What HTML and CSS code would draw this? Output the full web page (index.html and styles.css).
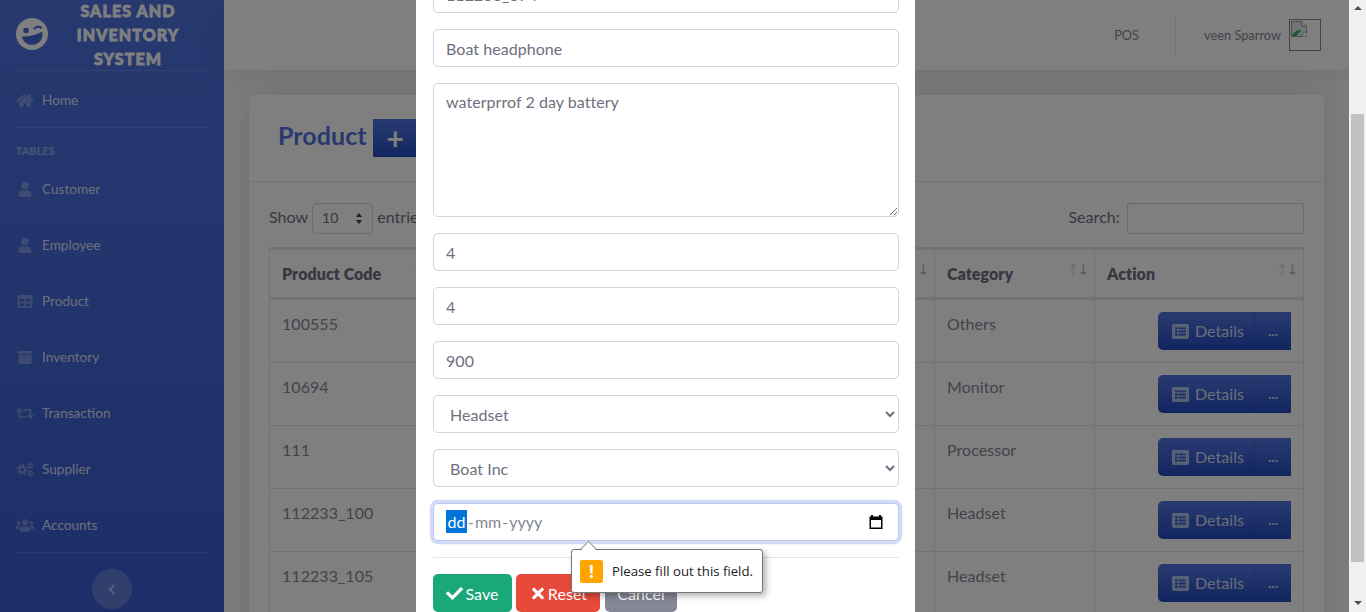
FILE: index.html
```html
<!DOCTYPE html>
<html>
<head>
    <title>Sales and Inventory System</title>
    <link rel="stylesheet" href="styles.css">
</head>
<body>
    <svg class="icon-defs" xmlns="http://www.w3.org/2000/svg">
        <symbol id="i-home" viewBox="0 0 576 512"><path d="M280.37 148.26L96 300.11V464a16 16 0 0 0 16 16l112.06-.29a16 16 0 0 0 15.92-16V368a16 16 0 0 1 16-16h64a16 16 0 0 1 16 16v95.64a16 16 0 0 0 16 16.05L464 480a16 16 0 0 0 16-16V300L295.67 148.26a12.19 12.19 0 0 0-15.3 0zM571.6 251.47L488 182.56V44.05a12 12 0 0 0-12-12h-56a12 12 0 0 0-12 12v72.61L318.47 43a48 48 0 0 0-61 0L4.34 251.47a12 12 0 0 0-1.6 16.9l25.5 31A12 12 0 0 0 45.15 301l235.22-193.74a12.19 12.19 0 0 1 15.3 0L530.9 301a12 12 0 0 0 16.9-1.6l25.5-31a12 12 0 0 0-1.7-16.93z"/></symbol>
        <symbol id="i-user" viewBox="0 0 448 512"><path d="M224 256c70.7 0 128-57.3 128-128S294.7 0 224 0 96 57.3 96 128s57.3 128 128 128zm89.6 32h-16.7c-22.2 10.2-46.9 16-72.9 16s-50.6-5.8-72.9-16h-16.7C60.2 288 0 348.2 0 422.4V464c0 26.5 21.5 48 48 48h352c26.5 0 48-21.5 48-48v-41.6c0-74.2-60.2-134.4-134.4-134.4z"/></symbol>
        <symbol id="i-table" viewBox="0 0 512 512"><path d="M464 32H48C21.49 32 0 53.49 0 80v352c0 26.51 21.49 48 48 48h416c26.51 0 48-21.49 48-48V80c0-26.51-21.49-48-48-48zM224 416H64v-96h160v96zm0-160H64v-96h160v96zm224 160H288v-96h160v96zm0-160H288v-96h160v96z"/></symbol>
        <symbol id="i-archive" viewBox="0 0 512 512"><path d="M32 448c0 17.7 14.3 32 32 32h384c17.7 0 32-14.3 32-32V160H32v288zm160-212c0-6.6 5.4-12 12-12h104c6.6 0 12 5.4 12 12v8c0 6.6-5.4 12-12 12H204c-6.6 0-12-5.4-12-12v-8zM480 32H32C14.3 32 0 46.3 0 64v48c0 8.8 7.2 16 16 16h480c8.8 0 16-7.2 16-16V64c0-17.7-14.3-32-32-32z"/></symbol>
        <symbol id="i-retweet" viewBox="0 0 640 512"><path d="M629.657 343.598L528.971 444.284c-9.373 9.372-24.568 9.372-33.941 0L394.343 343.598c-9.373-9.373-9.373-24.569 0-33.941l10.823-10.823c9.562-9.562 25.133-9.34 34.419.492L480 342.118V160H292.451a24.005 24.005 0 0 1-16.971-7.029l-16-16C244.361 121.851 255.069 96 276.451 96H520c13.255 0 24 10.745 24 24v222.118l40.416-42.792c9.285-9.831 24.856-10.054 34.419-.492l10.823 10.823c9.372 9.372 9.372 24.569-.001 33.941zm-265.138 15.431A23.999 23.999 0 0 0 347.548 352H160V169.881l40.416 42.792c9.286 9.831 24.856 10.054 34.419.491l10.822-10.822c9.373-9.373 9.373-24.569 0-33.941L144.971 67.716c-9.373-9.373-24.569-9.373-33.941 0L10.343 168.402c-9.373 9.373-9.373 24.569 0 33.941l10.822 10.822c9.562 9.562 25.133 9.34 34.419-.491L96 169.881V392c0 13.255 10.745 24 24 24h243.549c21.382 0 32.09-25.851 16.971-40.971l-16.001-16z"/></symbol>
        <symbol id="i-cogs" viewBox="0 0 640 512"><circle cx="224" cy="256" r="108" fill="none" stroke="currentColor" stroke-width="84"/><circle cx="224" cy="256" r="180" fill="none" stroke="currentColor" stroke-width="56" stroke-dasharray="62 79.4"/><circle cx="512" cy="124" r="62" fill="none" stroke="currentColor" stroke-width="48"/><circle cx="512" cy="124" r="100" fill="none" stroke="currentColor" stroke-width="30" stroke-dasharray="42 36.5"/><circle cx="512" cy="388" r="62" fill="none" stroke="currentColor" stroke-width="48"/><circle cx="512" cy="388" r="100" fill="none" stroke="currentColor" stroke-width="30" stroke-dasharray="42 36.5"/></symbol>
        <symbol id="i-users" viewBox="0 0 640 512"><path d="M96 224c35.3 0 64-28.7 64-64s-28.7-64-64-64-64 28.7-64 64 28.7 64 64 64zm448 0c35.3 0 64-28.7 64-64s-28.7-64-64-64-64 28.7-64 64 28.7 64 64 64zm32 32h-64c-17.6 0-33.5 7.1-45.1 18.6 40.3 22.1 68.9 62 75.1 109.4h66c17.7 0 32-14.3 32-32v-32c0-35.3-28.7-64-64-64zm-256 0c61.9 0 112-50.1 112-112S381.9 32 320 32 208 82.1 208 144s50.1 112 112 112zm76.8 32h-8.3c-20.8 10-43.9 16-68.5 16s-47.6-6-68.5-16h-8.3C179.6 288 128 339.6 128 403.2V432c0 26.5 21.5 48 48 48h288c26.5 0 48-21.5 48-48v-28.8c0-63.6-51.6-115.2-115.2-115.2zm-223.7-13.4C161.5 263.1 145.6 256 128 256H64c-35.3 0-64 28.7-64 64v32c0 17.7 14.3 32 32 32h65.9c6.3-47.4 34.9-87.3 75.2-109.4z"/></symbol>
        <symbol id="i-list" viewBox="0 0 512 512"><path d="M464 480H48c-26.51 0-48-21.49-48-48V80c0-26.51 21.49-48 48-48h416c26.51 0 48 21.49 48 48v352c0 26.51-21.49 48-48 48zM128 120c-22.091 0-40 17.909-40 40s17.909 40 40 40 40-17.909 40-40-17.909-40-40-40zm0 96c-22.091 0-40 17.909-40 40s17.909 40 40 40 40-17.909 40-40-17.909-40-40-40zm0 96c-22.091 0-40 17.909-40 40s17.909 40 40 40 40-17.909 40-40-17.909-40-40-40zm288-136v-32c0-6.627-5.373-12-12-12H204c-6.627 0-12 5.373-12 12v32c0 6.627 5.373 12 12 12h200c6.627 0 12-5.373 12-12zm0 96v-32c0-6.627-5.373-12-12-12H204c-6.627 0-12 5.373-12 12v32c0 6.627 5.373 12 12 12h200c6.627 0 12-5.373 12-12zm0 96v-32c0-6.627-5.373-12-12-12H204c-6.627 0-12 5.373-12 12v32c0 6.627 5.373 12 12 12h200c6.627 0 12-5.373 12-12z"/></symbol>
        <symbol id="i-check" viewBox="0 0 512 512"><path d="M173.898 439.404l-166.4-166.4c-9.997-9.997-9.997-26.206 0-36.204l36.203-36.204c9.997-9.998 26.207-9.998 36.204 0L192 312.69 432.095 72.596c9.997-9.997 26.207-9.997 36.204 0l36.203 36.204c9.997 9.997 9.997 26.206 0 36.204l-294.4 294.401c-9.998 9.997-26.207 9.997-36.204-.001z"/></symbol>
        <symbol id="i-times" viewBox="0 0 352 512"><path d="M242.72 256l100.07-100.07c12.28-12.28 12.28-32.19 0-44.48l-22.24-22.24c-12.28-12.28-32.19-12.28-44.48 0L176 189.28 75.93 89.21c-12.28-12.28-32.19-12.28-44.48 0L9.21 111.45c-12.28 12.28-12.28 32.19 0 44.48L109.28 256 9.21 356.07c-12.28 12.28-12.28 32.19 0 44.48l22.24 22.24c12.28 12.28 32.2 12.28 44.48 0L176 322.72l100.07 100.07c12.28 12.28 32.2 12.28 44.48 0l22.24-22.24c12.28-12.28 12.28-32.19 0-44.48L242.72 256z"/></symbol>
    </svg>

    <div class="window">
        <div class="page">
            <aside class="sidebar">
                <div class="brand">
                    <svg class="brand-logo" viewBox="0 0 32 32">
                        <circle cx="16" cy="16" r="16" fill="#fff"/>
                        <circle cx="10" cy="12.500" r="2.800" fill="#4766d6"/>
                        <path d="M18.500 10.500c1.500-2.200 4.500-2.200 6.500-.8" fill="none" stroke="#4766d6" stroke-width="2.200" stroke-linecap="round"/>
                        <path d="M6 18.500c5 .6 14-1 20-5 1.800 6-1.400 12-8 13.200-6 1-11.400-3-12-8.200z" fill="#4766d6"/>
                    </svg>
                    <div class="brand-text">Sales and Inventory System</div>
                </div>
                <hr class="side-rule">
                <a class="nav-item nav-home"><svg class="nav-icon"><use href="#i-home"/></svg>Home</a>
                <hr class="side-rule">
                <div class="side-heading">Tables</div>
                <a class="nav-item"><svg class="nav-icon"><use href="#i-user"/></svg>Customer</a>
                <a class="nav-item"><svg class="nav-icon"><use href="#i-user"/></svg>Employee</a>
                <a class="nav-item"><svg class="nav-icon"><use href="#i-table"/></svg>Product</a>
                <a class="nav-item"><svg class="nav-icon"><use href="#i-archive"/></svg>Inventory</a>
                <a class="nav-item"><svg class="nav-icon"><use href="#i-retweet"/></svg>Transaction</a>
                <a class="nav-item"><svg class="nav-icon"><use href="#i-cogs"/></svg>Supplier</a>
                <a class="nav-item"><svg class="nav-icon"><use href="#i-users"/></svg>Accounts</a>
                <hr class="side-rule side-rule-end">
                <div class="side-toggle">
                    <svg viewBox="0 0 10 14" width="8" height="11"><path d="M8 1.500 2.500 7 8 12.500" fill="none" stroke="currentColor" stroke-width="2.800"/></svg>
                </div>
            </aside>

            <div class="main">
                <header class="topbar">
                    <span class="top-link">POS</span>
                    <span class="top-divider"></span>
                    <span class="top-user">veen Sparrow</span>
                    <span class="avatar">
                        <svg viewBox="0 0 16 16" width="16" height="16">
                            <path d="M.5.5h10L15.500 5v6l-4 4.500H.5z" fill="#e2e6f2" stroke="#999" stroke-width="1"/>
                            <path d="M10.500.5V5h5" fill="#fff" stroke="#999" stroke-width="1"/>
                            <path d="M1 15c2-5 6-6.500 9.500-6L5 15z" fill="#4caf50"/>
                            <path d="M10 15.500 15.500 9.500v6z" fill="#fff" stroke="#999" stroke-width=".6"/>
                        </svg>
                    </span>
                </header>

                <section class="card">
                    <div class="card-head">
                        <h4 class="card-title">Product</h4>
                        <button class="btn-add">+</button>
                    </div>
                    <div class="card-body">
                        <div class="table-tools">
                            <label class="length-label">Show <span class="length-select">10<svg viewBox="0 0 8 14" width="8" height="13"><path d="M4 1 7.500 5.500H.5zM4 13 .5 8.500h7z" fill="#444"/></svg></span> entries</label>
                            <label class="search-label">Search: <input class="search-input" type="text"></label>
                        </div>
                        <table class="data-table">
                            <colgroup>
                                <col class="col-code"><col class="col-name"><col class="col-price"><col class="col-category"><col class="col-action">
                            </colgroup>
                            <thead>
                                <tr>
                                    <th>Product Code<span class="sort-arrows"></span></th>
                                    <th>Name<span class="sort-arrows"></span></th>
                                    <th>Price<span class="sort-arrows"></span></th>
                                    <th>Category<span class="sort-arrows"></span></th>
                                    <th>Action<span class="sort-arrows"></span></th>
                                </tr>
                            </thead>
                            <tbody>
                                <tr>
                                    <td>100555</td><td></td><td></td><td>Others</td>
                                    <td class="cell-action"><span class="btn-group"><span class="btn-details"><svg class="details-icon"><use href="#i-list"/></svg>Details</span><span class="btn-more">...</span></span></td>
                                </tr>
                                <tr>
                                    <td>10694</td><td></td><td></td><td>Monitor</td>
                                    <td class="cell-action"><span class="btn-group"><span class="btn-details"><svg class="details-icon"><use href="#i-list"/></svg>Details</span><span class="btn-more">...</span></span></td>
                                </tr>
                                <tr>
                                    <td>111</td><td></td><td></td><td>Processor</td>
                                    <td class="cell-action"><span class="btn-group"><span class="btn-details"><svg class="details-icon"><use href="#i-list"/></svg>Details</span><span class="btn-more">...</span></span></td>
                                </tr>
                                <tr>
                                    <td>112233_100</td><td></td><td></td><td>Headset</td>
                                    <td class="cell-action"><span class="btn-group"><span class="btn-details"><svg class="details-icon"><use href="#i-list"/></svg>Details</span><span class="btn-more">...</span></span></td>
                                </tr>
                                <tr>
                                    <td>112233_105</td><td></td><td></td><td>Headset</td>
                                    <td class="cell-action"><span class="btn-group"><span class="btn-details"><svg class="details-icon"><use href="#i-list"/></svg>Details</span><span class="btn-more">...</span></span></td>
                                </tr>
                            </tbody>
                        </table>
                    </div>
                </section>
            </div>

            <!-- modal sits over everything, scrolled so its top is cut off -->
            <div class="backdrop">
                <div class="modal">
                    <input class="field" type="text" value="112233_674">
                    <input class="field" type="text" value="Boat headphone">
                    <textarea class="field field-area">waterprrof 2 day battery</textarea>
                    <input class="field" type="text" value="4">
                    <input class="field" type="text" value="4">
                    <input class="field" type="text" value="900">
                    <select class="field"><option>Headset</option></select>
                    <select class="field"><option>Boat Inc</option></select>
                    <div class="field field-date">
                        <span class="date-text"><span class="date-part-on">dd</span><span class="date-sep">-</span>mm<span class="date-sep">-</span>yyyy</span>
                        <svg class="date-icon" viewBox="0 0 16 16"><path d="M3 1h2v1.500h6V1h2v1.500h1.500v12.500h-13V2.500H3zM3 6v7.500h10V6z" fill="#000"/></svg>
                    </div>
                    <hr class="modal-rule">
                    <div class="modal-actions">
                        <button class="btn btn-save"><svg class="btn-icon"><use href="#i-check"/></svg>Save</button>
                        <button class="btn btn-reset"><svg class="btn-icon btn-icon-times"><use href="#i-times"/></svg>Reset</button>
                        <button class="btn btn-cancel">Cancel</button>
                    </div>
                    <div class="validation-tip">
                        <span class="tip-arrow"></span>
                        <span class="tip-icon">!</span>
                        <span>Please fill out this field.</span>
                    </div>
                </div>
            </div>
        </div>

        <div class="scrollbar">
            <span class="scroll-up"></span>
            <span class="scroll-thumb"></span>
            <span class="scroll-down"></span>
        </div>
    </div>
</body>
</html>
```

FILE: styles.css
```css
* {
    box-sizing: border-box;
}
html, body {
    margin: 0;
    height: 612px;
    overflow: hidden;
}
body {
    font-family: Lato, "Open Sans", sans-serif;
    font-size: 16px;
    line-height: 24px;
    letter-spacing: .05px;
    color: #6e707e;
}
.icon-defs {
    display: none;
}
.window {
    display: flex;
    height: 612px;
}
.page {
    flex: 1;
    display: flex;
    position: relative;
    overflow: hidden;
    background: #f8f9fc;
}

/* sidebar */
.sidebar {
    width: 224px;
    flex: none;
    height: 612px;
    padding: 0 16px;
    background: linear-gradient(180deg, #4e73df 0%, #3a5ed0 100%);
    display: flex;
    flex-direction: column;
    color: rgba(255, 255, 255, .8);
}
.brand {
    height: 70px;
    flex: none;
    display: flex;
    align-items: center;
}
.brand-logo {
    width: 32px;
    height: 32px;
    margin-bottom: 2px;
    flex: none;
}
.brand-text {
    flex: 1;
    margin: 0 16px;
    text-align: center;
    color: #fff;
    font-weight: 900;
    font-size: 16px;
    line-height: 24px;
    letter-spacing: 1.1px;
    text-transform: uppercase;
    -webkit-text-stroke: .8px #fff;
}
.side-rule {
    width: 100%;
    margin: 0;
    border: 0;
    border-top: 1px solid rgba(255, 255, 255, .15);
    flex: none;
}
.side-rule-end {
    margin-top: -1px;
}
.nav-item {
    height: 56px;
    flex: none;
    display: flex;
    align-items: center;
    font-size: 13.6px;
    letter-spacing: 0;
}
.nav-home {
    padding-top: 2px;
}
.nav-icon {
    width: 18px;
    height: 15px;
    margin-right: 8px;
    flex: none;
    fill: rgba(255, 255, 255, .3);
    color: rgba(255, 255, 255, .3);
}
.side-heading {
    height: 33px;
    flex: none;
    font-size: 10.4px;
    font-weight: 800;
    line-height: 46px;
    letter-spacing: .3px;
    text-transform: uppercase;
    color: rgba(255, 255, 255, .4);
}
.side-toggle {
    width: 40px;
    height: 40px;
    margin: 16px auto 0;
    flex: none;
    display: flex;
    align-items: center;
    justify-content: center;
    border-radius: 50%;
    background: rgba(255, 255, 255, .2);
    color: rgba(255, 255, 255, .5);
}

/* topbar */
.main {
    flex: 1;
    min-width: 0;
}
.topbar {
    height: 70px;
    background: #fff;
    display: flex;
    align-items: center;
    justify-content: flex-end;
    padding-right: 28px;
    font-size: 12.8px;
    letter-spacing: 0;
    color: #858796;
    box-shadow: 0 2px 28px rgba(58, 59, 69, .15);
}
.top-divider {
    width: 1px;
    height: 38px;
    margin: 0 28px 0 36px;
    background: #e3e6f0;
}
.avatar {
    width: 32px;
    height: 32px;
    margin-left: 8px;
    border: 1px solid #858796;
    display: block;
    padding: 1px;
}
.avatar svg {
    display: block;
}

/* product card */
.card {
    margin: 25px 25px 0;
    background: #fff;
    border-radius: 5px;
    box-shadow: 0 2px 28px rgba(58, 59, 69, .15);
}
.card-head {
    height: 87px;
    padding: 23px 0 0 29px;
    display: flex;
    border-bottom: 1px solid #e3e6f0;
}
.card-title {
    margin: 0 6px 0 0;
    font-size: 25px;
    line-height: 34px;
    font-weight: 700;
    color: #4e73df;
}
.btn-add {
    width: 70px;
    height: 38px;
    margin-top: 1px;
    border: 0;
    font-family: inherit;
    font-size: 30px;
    font-weight: 700;
    line-height: 34px;
    color: #fff;
    background: linear-gradient(180deg, #4e73df 10%, #224abe 100%);
    text-align: left;
    padding: 0 0 0 14px;
}
.card-body {
    padding: 20px;
}
.table-tools {
    display: flex;
    justify-content: space-between;
    align-items: center;
    height: 32px;
    margin-bottom: 13px;
}
.length-select {
    display: inline-flex;
    align-items: center;
    justify-content: space-between;
    width: 61px;
    height: 31px;
    margin: 0;
    padding: 0 9px;
    border: 1px solid #d1d3e2;
    border-radius: 5px;
    font-size: 14px;
    vertical-align: middle;
}
.search-input {
    width: 177px;
    height: 31px;
    margin-left: 3px;
    border: 1px solid #d1d3e2;
    border-radius: 3px;
    vertical-align: middle;
}
.data-table {
    width: 100%;
    table-layout: fixed;
    border-collapse: collapse;
    border: 1px solid #e3e6f0;
    color: #858796;
}
.col-code { width: 170px; }
.col-name { width: 300px; }
.col-category { width: 160px; }
.col-action { width: 209px; }
.data-table th, .data-table td {
    border: 1px solid #e3e6f0;
    padding: 12px;
    vertical-align: top;
    text-align: left;
}
.data-table th {
    position: relative;
    height: 50px;
    padding-top: 10px;
    padding-bottom: 10px;
    border-top: 3px solid #e3e6f0;
    border-bottom: 3px solid #e3e6f0;
    color: #6e707e;
    font-weight: 800;
    vertical-align: middle;
}
.sort-arrows {
    position: absolute;
    right: 7px;
    top: 8px;
    font-family: "DejaVu Sans", sans-serif;
    font-size: 15px;
    font-weight: 400;
    letter-spacing: -2.5px;
    color: #6e707e;
}
.sort-arrows::before {
    content: "\2191";
    opacity: .25;
}
.sort-arrows::after {
    content: "\2193";
    opacity: .5;
}
.data-table td.cell-action {
    text-align: right;
    height: 63px;
}
.btn-group {
    display: inline-flex;
    height: 38px;
    color: rgba(255, 255, 255, .8);
    background: linear-gradient(180deg, #4e73df 10%, #224abe 100%);
    border-radius: 5px 0 0 5px;
    vertical-align: top;
}
.btn-details {
    width: 97px;
    padding-left: 14px;
    display: flex;
    align-items: center;
    border-right: 1px solid rgba(0, 0, 0, .1);
}
.details-icon {
    width: 17px;
    height: 17px;
    margin-right: 6px;
    fill: rgba(255, 255, 255, .6);
}
.btn-more {
    width: 36px;
    text-align: center;
    line-height: 38px;
    font-size: 14px;
    font-weight: 700;
}

/* modal */
.backdrop {
    position: absolute;
    inset: 0;
    background: rgba(0, 0, 0, .5);
}
.modal {
    position: relative;
    width: 499px;
    margin: -41px 0 0 416px;
    padding: 16px 16px 0 17px;
    height: 700px;
    background: #fff;
    display: flex;
    flex-direction: column;
    gap: 16px;
}
.field {
    width: 100%;
    height: 38px;
    flex: none;
    padding: 6px 12px;
    border: 1px solid #d1d3e2;
    border-radius: 5px;
    background: #fff;
    font-family: inherit;
    font-size: 16px;
    line-height: 24px;
    letter-spacing: .05px;
    color: #6e707e;
}
.field-area {
    height: 134px;
}
.field-date {
    display: flex;
    align-items: center;
    justify-content: space-between;
    border-color: #bac8f3;
    box-shadow: 0 0 0 3.2px rgba(78, 115, 223, .25);
    padding-right: 14px;
}
.date-text {
    color: #858796;
    letter-spacing: 0;
}
.date-part-on {
    display: inline-block;
    height: 23px;
    padding: 0 1.5px;
    background: #0075d9;
    color: #fff;
}
.date-sep {
    margin: 0 1px;
}
.date-icon {
    width: 16px;
    height: 16px;
}
.modal-rule {
    width: 100%;
    margin: 0;
    border: 0;
    border-top: 1px solid #e3e6f0;
    flex: none;
}
.modal-actions {
    display: flex;
    gap: 4px;
}
.btn {
    height: 38px;
    padding: 0;
    border: 0;
    border-radius: 5px;
    font-family: inherit;
    font-size: 16px;
    letter-spacing: .05px;
    color: #fff;
    display: flex;
    align-items: center;
    justify-content: center;
}
.btn-save {
    width: 79px;
    background: #1aa779;
}
.btn-reset {
    width: 84px;
    padding-left: 3px;
    background: #e74a3b;
}
.btn-cancel {
    width: 72px;
    margin-left: 1px;
    background: #858796;
}
.btn-icon {
    width: 17px;
    height: 17px;
    margin-right: 2px;
    fill: #fff;
}
.btn-icon-times {
    width: 12px;
    margin-right: 4px;
}

/* browser validation bubble */
.validation-tip {
    position: absolute;
    left: 155px;
    top: 590px;
    width: 192px;
    height: 44px;
    display: flex;
    align-items: center;
    gap: 9px;
    padding-left: 8px;
    background: #fff;
    border: 1px solid #777;
    border-radius: 3px;
    box-shadow: 3px 3px 6px rgba(0, 0, 0, .3);
    font-family: "Open Sans", "Noto Sans", sans-serif;
    font-size: 13.2px;
    letter-spacing: 0;
    color: #222;
}
.tip-arrow {
    position: absolute;
    left: 11px;
    top: -7px;
    width: 11px;
    height: 11px;
    background: #fff;
    border-left: 1px solid #999;
    border-top: 1px solid #999;
    transform: rotate(45deg);
}
.tip-icon {
    width: 23px;
    height: 23px;
    flex: none;
    border-radius: 2px;
    background: #ffa500;
    color: #fff;
    text-align: center;
    font-weight: 700;
    font-size: 17px;
    line-height: 23px;
}

/* page scrollbar */
.scrollbar {
    width: 17px;
    flex: none;
    height: 612px;
    background: #f1f1f1;
    display: flex;
    flex-direction: column;
    align-items: center;
}
.scroll-up, .scroll-down {
    width: 0;
    height: 0;
    border-left: 4px solid transparent;
    border-right: 4px solid transparent;
}
.scroll-up {
    margin-top: 6px;
    border-bottom: 4px solid #505050;
}
.scroll-thumb {
    width: 13px;
    height: 448px;
    margin-top: 104px;
    background: #c1c1c1;
}
.scroll-down {
    margin-top: 39px;
    border-top: 4px solid #505050;
}
```
